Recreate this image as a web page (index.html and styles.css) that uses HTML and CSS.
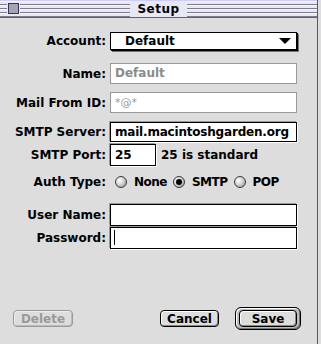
FILE: index.html
```html
<!DOCTYPE html>
<html lang="en">
<head>
  <meta charset="UTF-8" />
  <title>Setup</title>
  <link rel="stylesheet" href="styles.css">
</head>
<body>
  <div class="window">
    <div class="titlebar">
      <span class="closebox"></span>
      <span class="title">Setup</span>
    </div>

    <div class="form">
      <div class="row row-account">
        <span class="label">Account:</span>
        <div class="popup">
          <span>Default</span>
          <span class="popup-arrow"></span>
        </div>
      </div>

      <div class="row row-name">
        <span class="label">Name:</span>
        <div class="field field-disabled">Default</div>
      </div>

      <div class="row row-from">
        <span class="label">Mail From ID:</span>
        <div class="field field-disabled field-plain">*@*</div>
      </div>

      <div class="row row-server">
        <span class="label">SMTP Server:</span>
        <div class="field field-server">mail.macintoshgarden.org</div>
      </div>

      <div class="row row-port">
        <span class="label">SMTP Port:</span>
        <div class="field field-port">25</div>
        <span class="note">25 is standard</span>
      </div>

      <div class="row row-auth">
        <span class="label">Auth Type:</span>
        <div class="radios">
          <span class="radio"></span><span class="radio-text">None</span>
          <span class="radio checked"></span><span class="radio-text">SMTP</span>
          <span class="radio"></span><span class="radio-text">POP</span>
        </div>
      </div>

      <div class="row row-user">
        <span class="label">User Name:</span>
        <div class="field field-tall"></div>
      </div>

      <div class="row row-pass">
        <span class="label">Password:</span>
        <div class="field field-tall"><span class="caret"></span></div>
      </div>
    </div>

    <div class="buttons">
      <span class="btn btn-disabled btn-delete">Delete</span>
      <span class="btn btn-cancel">Cancel</span>
      <span class="btn-ring"><span class="btn btn-save">Save</span></span>
    </div>
  </div>
</body>
</html>
```

FILE: styles.css
```css
html, body {
  margin: 0;
  padding: 0;
  background: #dddddd;
  font-family: "DejaVu Sans", sans-serif;
  font-weight: bold;
  font-size: 12px;
  color: #000;
}

.window {
  width: 317px;
  height: 344px;
  border-right: 1px solid #55557a;
  background: #dddddd;
  display: flex;
  flex-direction: column;
}

/* Title bar */
.titlebar {
  height: 16px;
  border-top: 1px solid #ccccff;
  border-bottom: 1px solid #5a5a9c;
  background: repeating-linear-gradient(180deg,
    #e8e8f4 0, #e8e8f4 2px,
    #7d7d8c 2px, #7d7d8c 3px,
    #f4f4ff 3px, #f4f4ff 4px);
  background-size: 100% 4px;
  background-position: 0 1px;
  display: flex;
  align-items: center;
  justify-content: center;
  position: relative;
}
.closebox {
  position: absolute;
  left: 8px;
  top: 2px;
  width: 9px;
  height: 9px;
  border: 1px solid #33336b;
  background: #a4a4ac;
  box-shadow: 0 0 0 1px #e8e8f4;
}
.title {
  background: #e8e8f4;
  padding: 0 7px;
  height: 16px;
  line-height: 16px;
  letter-spacing: 0.5px;
}

/* Form rows */
.form {
  display: flex;
  flex-direction: column;
}
.row {
  display: flex;
  align-items: center;
}
.label {
  width: 106px;
  text-align: right;
  margin-right: 4px;
  flex: 0 0 auto;
  white-space: nowrap;
}

.row-account { margin-top: 14px; }
.row-name { margin-top: 13px; }
.row-from { margin-top: 8px; }
.row-server { margin-top: 9px; }
.row-port { margin-top: 2px; }
.row-auth { margin-top: 9px; }
.row-user { margin-top: 15px; }
.row-pass { margin-top: 1px; }

.popup {
  height: 16px;
  border: 1px solid #000;
  background: #fff;
  box-shadow: 1px 1px 0 #000, 2px 2px 0 #777;
  display: flex;
  align-items: center;
  justify-content: space-between;
  padding-left: 14px;
  box-sizing: content-box;
  width: 171px;
}
.popup-arrow {
  width: 0;
  height: 0;
  border-left: 6px solid transparent;
  border-right: 6px solid transparent;
  border-top: 6px solid #000;
  margin-right: 5px;
}

.field {
  width: 187px;
  height: 21px;
  box-sizing: border-box;
  border: 1px solid #000;
  background: #fff;
  padding-left: 4px;
  line-height: 19px;
  white-space: nowrap;
  overflow: hidden;
  box-shadow: -1px -1px 0 #999, 1px 1px 0 #fff;
}
.field-server {
  height: 20px;
  line-height: 18px;
  letter-spacing: -0.2px;
}
.field-disabled {
  border-color: #999;
  color: #8a8a8a;
  box-shadow: none;
}
.field-plain {
  font-weight: normal;
  font-size: 11px;
  color: #9a9a9a;
}
.field-port {
  width: 46px;
  height: 22px;
  line-height: 20px;
}
.field-tall {
  height: 22px;
}
.note {
  margin-left: 5px;
}
.caret {
  display: inline-block;
  width: 1px;
  height: 15px;
  background: #000;
  vertical-align: middle;
  margin-left: -1px;
}

/* Radios */
.radios {
  display: flex;
  align-items: center;
  padding-left: 5px;
}
.radio {
  width: 10px;
  height: 10px;
  border-radius: 50%;
  border: 1px solid #3a3a3a;
  background: radial-gradient(circle at 35% 35%, #ffffff 0, #d8d8d8 40%, #8c8c8c 100%);
  position: relative;
}
.radio.checked::after {
  content: "";
  position: absolute;
  left: 2px;
  top: 2px;
  width: 6px;
  height: 6px;
  border-radius: 50%;
  background: #000;
}
.radio-text {
  margin-left: 7px;
  margin-right: 6px;
  letter-spacing: -0.5px;
}

/* Buttons */
.buttons {
  margin-top: auto;
  margin-bottom: 14px;
  display: flex;
  align-items: center;
  padding-left: 13px;
}
.btn {
  display: inline-flex;
  align-items: center;
  justify-content: center;
  box-sizing: border-box;
  height: 17px;
  border: 1px solid #000;
  border-radius: 4px;
  background: #dddddd;
  box-shadow: inset 1px 1px 0 #fff, inset -1px -1px 0 #888;
}
.btn-disabled {
  border-color: #999;
  color: #999;
  box-shadow: inset 1px 1px 0 #eee, inset -1px -1px 0 #bbb;
}
.btn-delete {
  width: 60px;
}
.btn-cancel {
  width: 59px;
  margin-left: 87px;
}
.btn-ring {
  margin-left: 16px;
  padding: 2px 3px;
  border: 1px solid #000;
  border-radius: 6px;
  background: #bdbdbd;
  box-shadow: inset 1px 1px 0 #fff, inset -1px -1px 0 #777;
  display: inline-flex;
}
.btn-save {
  width: 58px;
}
```
